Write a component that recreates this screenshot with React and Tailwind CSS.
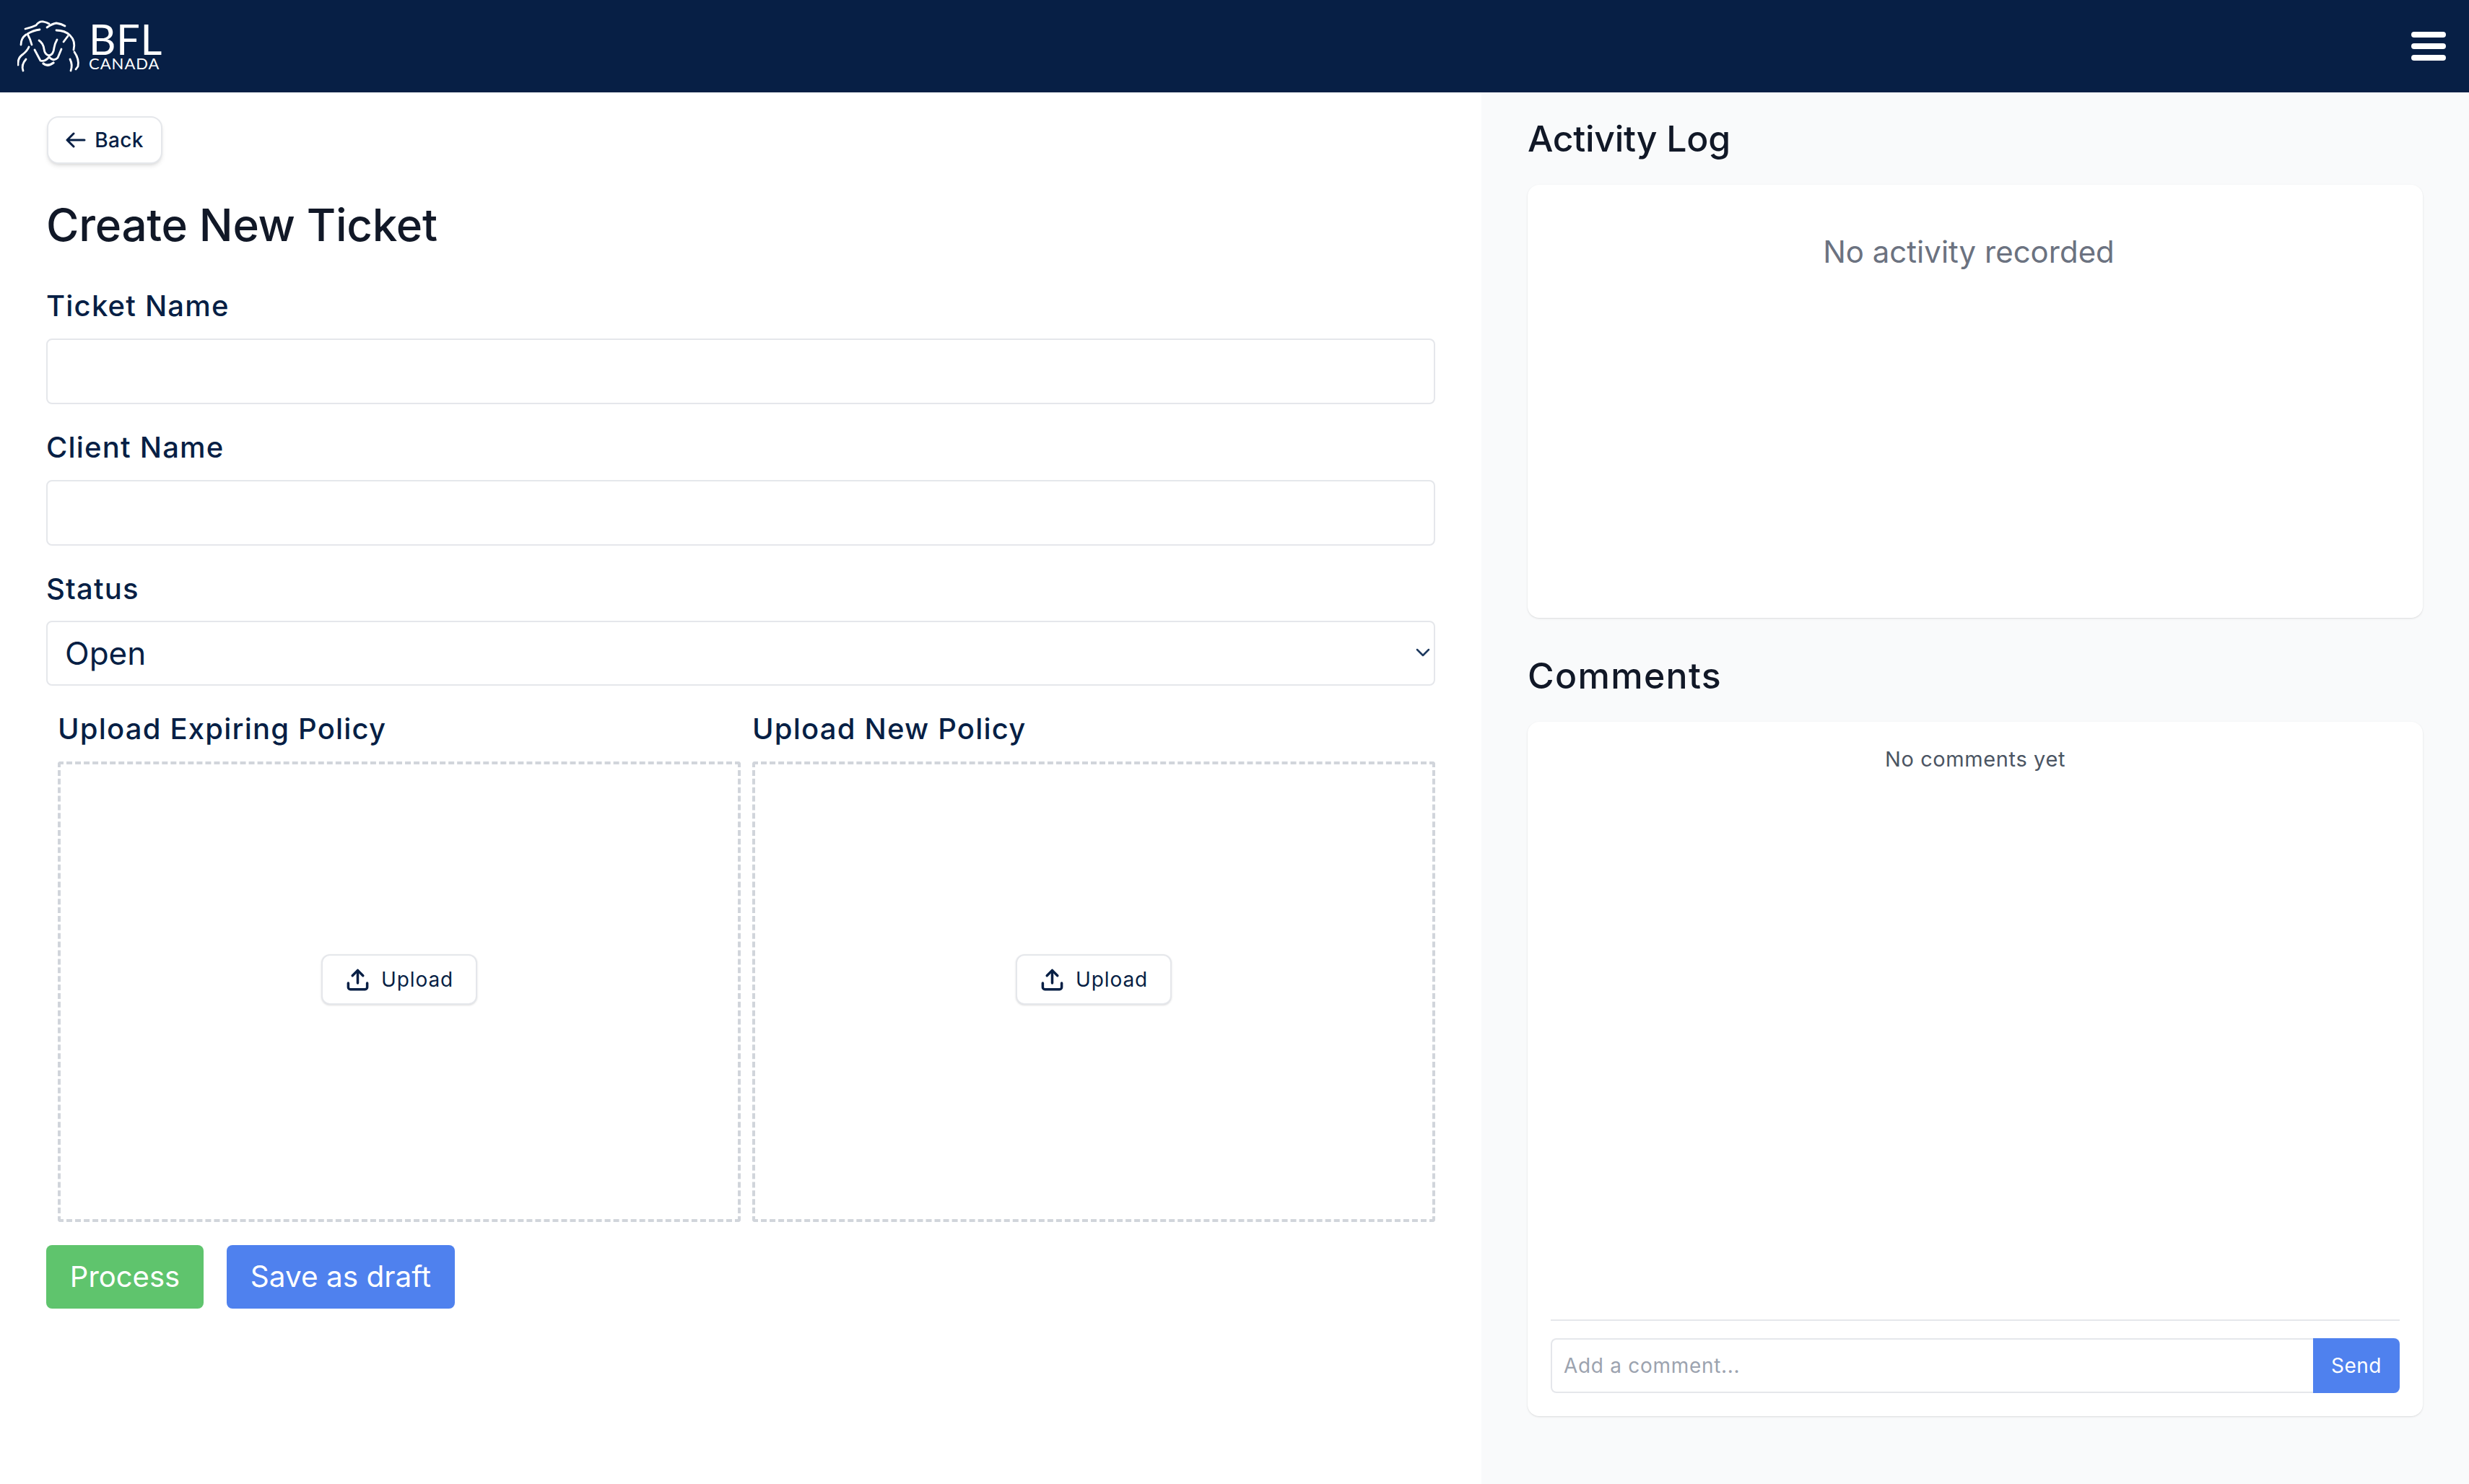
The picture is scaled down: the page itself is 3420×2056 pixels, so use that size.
import React from "react";
import { Upload, ChevronDown } from "lucide-react";

const FONT = "font-['Inter','Noto_Sans',sans-serif]";

function Logo() {
  return (
    <div className="flex items-center pl-[24px]">
      {/* lion mark */}
      <svg width="88" height="72" viewBox="24 28 88 72" fill="none" stroke="#ffffff" strokeWidth="2.8" strokeLinecap="round" strokeLinejoin="round">
        <path d="M35 40 Q44 38 50 35 Q54 29 60 30 Q65 31 68 33" />
        <path d="M65 38 Q72 33 78 32 Q85 33 90 36" />
        <path d="M55 41 Q46 42 38 47 Q42 54 44 62" />
        <path d="M78 42 Q90 42 97 49 Q105 57 102 69" />
        <path d="M88 58 L94 50" />
        <path d="M29 62 Q29 53 36 48" />
        <path d="M25 90 Q24 80 32 75 Q38 70 40 65" />
        <path d="M32 98 Q29 90 36 82" />
        <path d="M103 72 Q110 82 108 92 L105 96" />
        <path d="M97 82 Q101 90 98 98" />
        <path d="M54 56 Q60 60 61 68 Q62 76 68 77 Q74 76 75 66 Q76 60 79 55" />
        <path d="M48 69 L56 84 Q62 86 68 79 Q74 86 80 80 L85 68" />
        <path d="M60 88 Q66 93 74 87" strokeWidth="3.4" />
      </svg>
      <div className="ml-[11px] flex flex-col text-white font-['Lato',sans-serif]">
        <span className="h-[47px] text-[58px] leading-[46px] tracking-[0.6px]">BFL</span>
        <span className="h-[20px] text-[22px] leading-[20px] tracking-[1px]">CANADA</span>
      </div>
    </div>
  );
}

function Field({ label, top = "mt-[30px]", children }) {
  return (
    <div className={top}>
      <label className="block h-[60px] text-[40px] leading-[60px] font-[450] tracking-[1.2px] text-[#071f45]">{label}</label>
      {children}
    </div>
  );
}

function UploadBox({ label }) {
  return (
    <div>
      <div className="h-[60px] text-[40px] leading-[60px] font-[450] tracking-[1.2px] text-[#071f45]">{label}</div>
      <div className="mt-[15px] flex h-[638px] items-center justify-center rounded-[4px] border-4 border-dashed border-[#d1d5db] pb-[34px]">
        <button className="flex h-[70px] w-[216px] items-center justify-center gap-[15px] rounded-[12px] border-2 border-[#e5e7eb] bg-white text-[28px] tracking-[0.9px] text-[#071f45] shadow-sm">
          <Upload size={35} strokeWidth={2.4} />
          Upload
        </button>
      </div>
    </div>
  );
}

export default function App() {
  return (
    <div className={`flex min-h-[2056px] flex-col bg-white ${FONT}`}>
      <header className="flex h-[128px] items-center justify-between bg-[#071f45]">
        <Logo />
        <div className="mr-[32px] flex w-[48px] flex-col gap-[8px]">
          <span className="h-[8px] rounded-full bg-white" />
          <span className="h-[8px] rounded-full bg-white" />
          <span className="h-[8px] rounded-full bg-white" />
        </div>
      </header>

      <div className="flex flex-1">
        {/* ticket form */}
        <main className="w-[2052px] px-[64px] pt-[33px]">
          <button className="ml-px flex h-[66px] w-[160px] items-center justify-center gap-[12px] rounded-[16px] border-2 border-[#e5e7eb] bg-white text-[28px] font-medium tracking-[0.4px] text-[#071f45] shadow-md">
            <svg width="28" height="22" viewBox="0 0 28 22" fill="none" stroke="currentColor" strokeWidth="3" strokeLinecap="round" strokeLinejoin="round">
              <path d="M26 11 L2 11 M11 2 L2 11 L11 20" />
            </svg>
            Back
          </button>
          <h1 className="mt-[49px] h-[72px] text-[62px] leading-[72px] font-medium tracking-[-0.3px] text-[#111827]">Create New Ticket</h1>

          <Field label="Ticket Name" top="mt-[46px]">
            <input className="mt-[15px] block h-[91px] w-full rounded-[8px] border-2 border-[#e5e7eb] bg-white px-[24px] text-[40px] outline-none" />
          </Field>
          <Field label="Client Name">
            <input className="mt-[15px] block h-[91px] w-full rounded-[8px] border-2 border-[#e5e7eb] bg-white px-[24px] text-[40px] outline-none" />
          </Field>
          <Field label="Status">
            <div className="relative mt-[14px]">
              <select className="block h-[90px] w-full appearance-none rounded-[8px] border-2 border-[#e5e7eb] bg-white px-[24px] text-[44px] text-[#071f45] outline-none">
                <option>Open</option>
              </select>
              <ChevronDown size={32} strokeWidth={1.9} className="pointer-events-none absolute right-px top-[28px] text-[#1e3a5f]" />
            </div>
          </Field>

          <div className="mt-[30px] grid grid-cols-2 gap-[16px] pl-[16px]">
            <UploadBox label="Upload Expiring Policy" />
            <UploadBox label="Upload New Policy" />
          </div>

          <div className="mt-[32px] flex gap-[32px]">
            <button className="h-[88px] w-[218px] rounded-[8px] bg-[#5fc46d] text-[40px] text-white">Process</button>
            <button className="h-[88px] w-[316px] rounded-[8px] bg-[#4f81ee] text-[40.5px] text-white">Save as draft</button>
          </div>
        </main>

        {/* activity and comments */}
        <aside className="w-[1368px] bg-[#f9fafb] px-[64px] pt-[34px]">
          <h2 className="h-[60px] text-[50px] leading-[60px] font-medium tracking-[-0.3px] text-[#111827]">Activity Log</h2>
          <div className="mt-[34px] h-[600px] rounded-[16px] bg-white pr-[18px] pt-[63px] text-center text-[42px] leading-[60px] text-[#6b7280] shadow-sm">
            No activity recorded
          </div>

          <h2 className="mt-[50px] h-[60px] text-[50px] leading-[60px] font-medium tracking-[1.3px] text-[#111827]">Comments</h2>
          <div className="mt-[34px] flex h-[962px] flex-col rounded-[16px] bg-white px-[32px] pb-[32px] shadow-sm">
            <div className="flex-1 pt-[32px] text-center text-[29px] leading-[40px] tracking-[0.6px] text-[#4b5563]">No comments yet</div>
            <div className="border-t-2 border-[#e5e7eb] pt-[24px]">
              <div className="flex h-[76px]">
                <input
                  placeholder="Add a comment..."
                  className="min-w-0 flex-1 rounded-l-[8px] border-2 border-r-0 border-[#e5e7eb] bg-white px-[16px] text-[28px] tracking-[0.7px] outline-none placeholder:text-[#9ca3af]"
                />
                <button className="w-[120px] rounded-r-[8px] bg-[#4f81ee] text-[28px] tracking-[0.5px] text-white">Send</button>
              </div>
            </div>
          </div>
        </aside>
      </div>
    </div>
  );
}
